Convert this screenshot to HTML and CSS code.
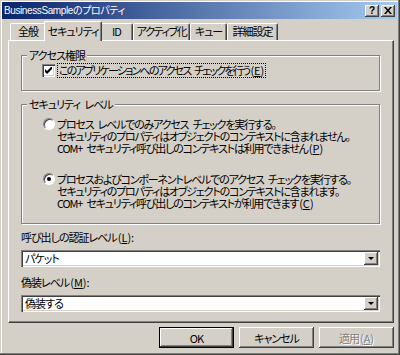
FILE: index.html
```html
<!DOCTYPE html>
<html lang="ja">
<head>
  <meta charset="UTF-8">
  <title>BusinessSampleのプロパティ</title>
  <link rel="stylesheet" href="styles.css">
</head>
<body>
  <div class="window">
    <div class="titlebar">
      <span class="title">BusinessSampleのプロパティ</span>
      <span class="caption-buttons">
        <span class="cap-btn help">?</span>
        <span class="cap-btn close">
          <svg width="8" height="7" viewBox="0 0 8 7"><path d="M0 0h2l2 2.5L6 0h2L5 3.5 8 7H6L4 4.5 2 7H0l3-3.5z" fill="#000"/></svg>
        </span>
      </span>
    </div>

    <div class="tabs">
      <span class="tab t1">全般</span>
      <span class="tab t2 active">セキュリティ</span>
      <span class="tab t3">ID</span>
      <span class="tab t4">アクティブ化</span>
      <span class="tab t5">キュー</span>
      <span class="tab t6">詳細設定</span>
    </div>

    <div class="panel">
      <div class="group group-access">
        <span class="group-title">アクセス権限</span>
        <div class="check-row">
          <span class="checkbox">
            <svg width="7" height="7" viewBox="0 0 7 7"><path d="M0 2v3l2 2 5-5V-1L2 4z" fill="#000"/></svg>
          </span>
          <span class="focus">このアプリケーションへのアクセス チェックを行う<span class="key">(<u>E</u>)</span></span>
        </div>
      </div>

      <div class="group group-level">
        <span class="group-title">セキュリティ レベル</span>
        <div class="radio-row">
          <span class="radio"></span>
          <span class="radio-text">プロセス レベルでのみアクセス チェックを実行する。<br>セキュリティのプロパティはオブジェクトのコンテキストに含まれません。<br>COM+ セキュリティ呼び出しのコンテキストは利用できません<span class="key">(<u>P</u>)</span></span>
        </div>
        <div class="radio-row">
          <span class="radio checked"></span>
          <span class="radio-text">プロセスおよびコンポーネントレベルでのアクセス チェックを実行する。<br>セキュリティのプロパティはオブジェクトのコンテキストに含まれます。<br>COM+ セキュリティ呼び出しのコンテキストが利用できます<span class="key">(<u>C</u>)</span></span>
        </div>
      </div>

      <div class="field">
        <span class="field-label">呼び出しの認証レベル<span class="key">(<u>L</u>):</span></span>
        <div class="combo">
          <span class="combo-value">パケット</span>
          <span class="combo-btn"><span class="arrow"></span></span>
        </div>
      </div>

      <div class="field">
        <span class="field-label">偽装レベル<span class="key">(<u>M</u>):</span></span>
        <div class="combo">
          <span class="combo-value">偽装する</span>
          <span class="combo-btn"><span class="arrow"></span></span>
        </div>
      </div>
    </div>

    <div class="buttons">
      <span class="btn default">OK</span>
      <span class="btn">キャンセル</span>
      <span class="btn disabled">適用<span class="key">(<u>A</u>)</span></span>
    </div>
  </div>
</body>
</html>
```

FILE: styles.css
```css
* {
  box-sizing: border-box;
}
body {
  margin: 0;
  font-family: "Noto Sans CJK JP", sans-serif;
  font-size: 11px;
  letter-spacing: -1.2px;
  word-spacing: 3px;
  font-feature-settings: "palt";
  color: #000;
  background: #d4d0c8;
  white-space: nowrap;
}
u {
  text-decoration-thickness: 1px;
  text-underline-offset: 1px;
}
.key {
  letter-spacing: 0;
  padding-left: 1px;
}
.window {
  width: 400px;
  height: 355px;
  padding: 2px 3px 3px 2px;
  background: #d4d0c8;
  display: flex;
  flex-direction: column;
  box-shadow: inset -1px -1px 0 #404040, inset -2px -2px 0 #808080, inset 1px 1px 0 #d4d0c8, inset 2px 2px 0 #fff;
}
.titlebar {
  height: 17px;
  flex: none;
  display: flex;
  align-items: center;
  justify-content: space-between;
  padding: 0 2px 0 2px;
  background: linear-gradient(to right, #0a246a, #a6caf0);
  color: #fff;
}
.title {
  font-family: "Liberation Sans", "Noto Sans CJK JP", sans-serif;
  font-size: 10px;
  letter-spacing: -0.4px;
  line-height: 17px;
}
.caption-buttons {
  display: flex;
  gap: 2px;
}
.cap-btn {
  width: 14px;
  height: 12px;
  background: #d4d0c8;
  color: #000;
  display: flex;
  align-items: center;
  justify-content: center;
  font-family: "Liberation Sans", sans-serif;
  font-weight: bold;
  font-size: 10px;
  letter-spacing: 0;
  line-height: 1;
  box-shadow: inset -1px -1px 0 #404040, inset 1px 1px 0 #fff, inset -2px -2px 0 #808080;
}
.tabs {
  height: 21px;
  flex: none;
  display: flex;
  align-items: flex-end;
  padding-left: 8px;
  letter-spacing: -1px;
}
.tab {
  height: 17px;
  padding: 0;
  line-height: 15px;
  text-align: center;
  border-top: 1px solid #fff;
  border-left: 1px solid #fff;
  border-right: 1px solid #404040;
  border-radius: 2px 2px 0 0;
  box-shadow: inset -1px 0 0 #808080;
}
.tab.active {
  height: 20px;
  line-height: 18px;
  margin: 0 -2px -1px;
  position: relative;
  z-index: 1;
  background: #d4d0c8;
}
.t1 { width: 36px; }
.t2 { width: 58px; }
.t3 { width: 33px; }
.t4 { width: 57px; letter-spacing: -1.4px; }
.t5 { width: 37px; }
.t6 { width: 51px; }
.panel {
  height: 283px;
  flex: none;
  margin: 0 3px 0 6px;
  padding: 14px 13px 0 12px;
  border-top: 1px solid #fff;
  border-left: 1px solid #fff;
  border-right: 1px solid #404040;
  border-bottom: 1px solid #404040;
  box-shadow: inset -1px -1px 0 #808080;
}
.group {
  position: relative;
  border: 1px solid #808080;
  box-shadow: inset 1px 1px 0 #fff, 1px 1px 0 #fff;
}
.group-title {
  position: absolute;
  top: -8px;
  left: 5px;
  padding: 0 2px;
  line-height: 14px;
  letter-spacing: -1px;
  background: #d4d0c8;
}
.group-access {
  height: 36px;
  padding: 8px 0 0 20px;
}
.check-row {
  display: flex;
  align-items: center;
  gap: 3px;
}
.checkbox {
  width: 13px;
  height: 13px;
  background: #fff;
  display: flex;
  align-items: center;
  justify-content: center;
  box-shadow: inset 1px 1px 0 #808080, inset 2px 2px 0 #404040, inset -1px -1px 0 #fff, inset -2px -2px 0 #d4d0c8;
}
.focus {
  outline: 1px dotted #000;
  padding: 0 1px;
  line-height: 13px;
  letter-spacing: -1.8px;
}
.group-level {
  height: 120px;
  margin-top: 13px;
  padding: 13px 0 0 21px;
  display: flex;
  flex-direction: column;
  gap: 19px;
}
.radio-row {
  display: flex;
  align-items: flex-start;
  gap: 2px;
}
.radio {
  flex: none;
  width: 12px;
  height: 12px;
  border-radius: 50%;
  background: #fff;
  border: 1px solid;
  border-color: #808080 #fff #fff #808080;
  box-shadow: inset 1px 1px 0 #404040;
  display: flex;
  align-items: center;
  justify-content: center;
}
.radio.checked::after {
  content: "";
  width: 4px;
  height: 4px;
  border-radius: 50%;
  background: #000;
}
.radio-text {
  line-height: 12px;
}
.field {
  display: flex;
  flex-direction: column;
}
.field-label {
  margin-top: 7px;
  line-height: 13px;
  height: 15px;
  letter-spacing: -1px;
}
.combo {
  height: 17px;
  margin-top: 4px;
  display: flex;
  align-items: center;
  justify-content: space-between;
  background: #fff;
  padding: 2px;
  box-shadow: inset 1px 1px 0 #808080, inset 2px 2px 0 #404040, inset -1px -1px 0 #fff, inset -2px -2px 0 #d4d0c8;
}
.combo-value {
  padding-left: 2px;
  line-height: 13px;
  letter-spacing: -1px;
}
.combo-btn {
  width: 14px;
  height: 13px;
  background: #d4d0c8;
  display: flex;
  align-items: center;
  justify-content: center;
  box-shadow: inset -1px -1px 0 #404040, inset 1px 1px 0 #fff, inset -2px -2px 0 #808080;
}
.arrow {
  width: 0;
  height: 0;
  border-left: 3px solid transparent;
  border-right: 3px solid transparent;
  border-top: 3px solid #000;
}
.field + .field .field-label {
  margin-top: 9px;
}
.buttons {
  display: flex;
  justify-content: flex-end;
  gap: 5px;
  padding: 4px 3px 0 0;
  letter-spacing: -1px;
}
.btn {
  width: 75px;
  height: 21px;
  display: flex;
  align-items: center;
  justify-content: center;
  box-shadow: inset -1px -1px 0 #404040, inset 1px 1px 0 #fff, inset -2px -2px 0 #808080;
}
.btn.default {
  border: 1px solid #000;
}
.btn.disabled {
  color: #808080;
  text-shadow: 1px 1px 0 #fff;
}
```
